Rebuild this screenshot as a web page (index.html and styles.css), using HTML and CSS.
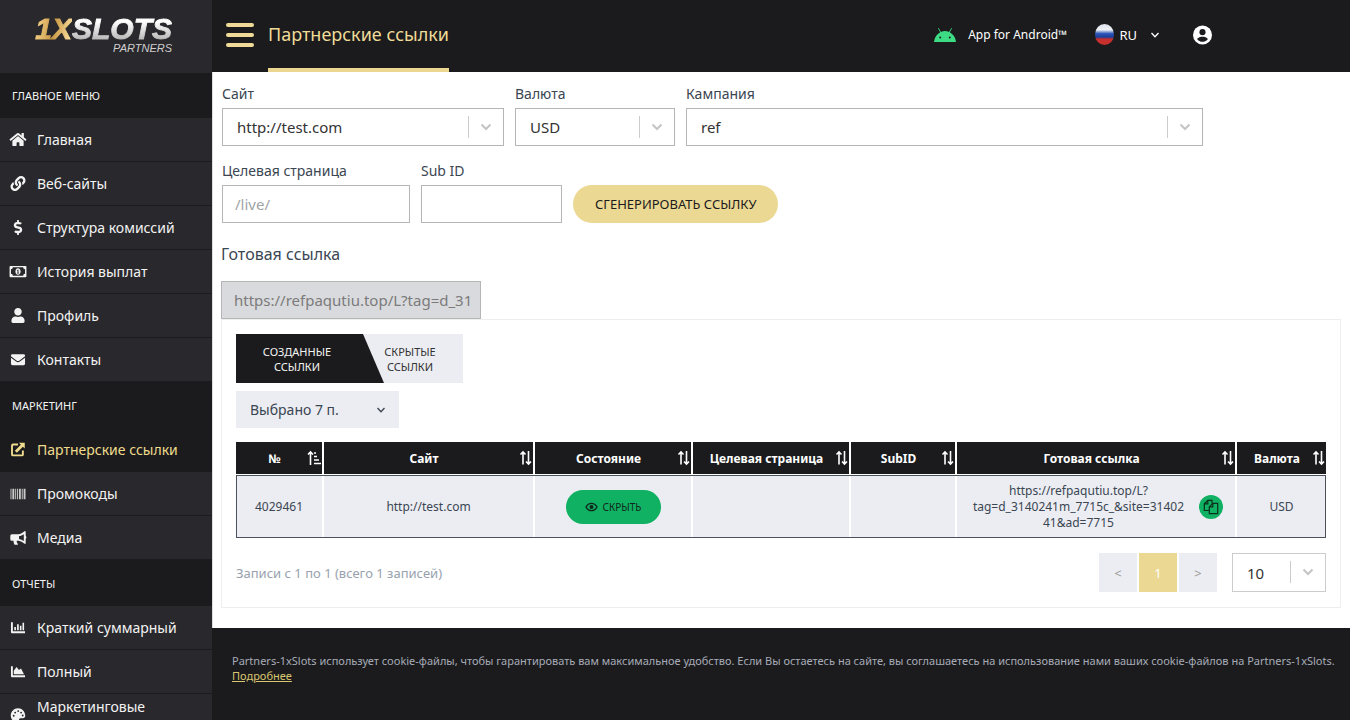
FILE: index.html
```html
<!DOCTYPE html>
<html lang="ru">
<head>
<meta charset="utf-8">
<title>Партнерские ссылки</title>
<link rel="stylesheet" href="styles.css">
</head>
<body>
<div class="app">
  <aside class="sidebar">
    <a class="logo" href="#">
      <span class="logo-main"><span class="logo-gold">1X</span><span class="logo-silver">SLOTS</span></span>
      <span class="logo-sub">PARTNERS</span>
    </a>
    <nav class="menu">
      <h2 class="menu-head">ГЛАВНОЕ МЕНЮ</h2>
      <a class="menu-item" href="#"><svg class="icon" viewBox="0 0 576 512"><path d="M280.37 148.26L96 300.11V464a16 16 0 0 0 16 16l112.06-.29a16 16 0 0 0 15.92-16V368a16 16 0 0 1 16-16h64a16 16 0 0 1 16 16v95.64a16 16 0 0 0 16 16.05L464 480a16 16 0 0 0 16-16V300L295.67 148.26a12.19 12.19 0 0 0-15.3 0zM571.6 251.47L488 182.56V44.05a12 12 0 0 0-12-12h-56a12 12 0 0 0-12 12v72.61L318.47 43a48 48 0 0 0-61 0L4.34 251.47a12 12 0 0 0-1.6 16.9l25.5 31A12 12 0 0 0 45.15 301l235.22-193.74a12.19 12.19 0 0 1 15.3 0L530.9 301a12 12 0 0 0 16.9-1.6l25.5-31a12 12 0 0 0-1.7-16.93z"/></svg>Главная</a>
      <a class="menu-item" href="#"><svg class="icon" viewBox="0 0 512 512"><path d="M326.612 185.391c59.747 59.809 58.927 155.698.36 214.59-.11.12-.24.25-.36.37l-67.2 67.2c-59.27 59.27-155.699 59.262-214.96 0-59.27-59.26-59.27-155.7 0-214.96l37.106-37.106c9.84-9.84 26.786-3.3 27.294 10.606.648 17.722 3.826 35.527 9.69 52.721 1.986 5.822.567 12.262-3.783 16.612l-13.087 13.087c-28.026 28.026-28.905 73.66-1.155 101.96 28.024 28.579 74.086 28.749 102.325.51l67.2-67.19c28.191-28.191 28.073-73.757 0-101.83-3.701-3.694-7.429-6.564-10.341-8.569a16.037 16.037 0 0 1-6.947-12.606c-.396-10.567 3.348-21.456 11.698-29.806l21.054-21.055c5.521-5.521 14.182-6.199 20.584-1.731a152.482 152.482 0 0 1 20.522 17.197zM467.547 44.449c-59.261-59.262-155.69-59.27-214.96 0l-67.2 67.2c-.12.12-.25.25-.36.37-58.566 58.892-59.387 154.781.36 214.59a152.454 152.454 0 0 0 20.521 17.196c6.402 4.468 15.064 3.789 20.584-1.731l21.054-21.055c8.35-8.35 12.094-19.239 11.698-29.806a16.037 16.037 0 0 0-6.947-12.606c-2.912-2.005-6.64-4.875-10.341-8.569-28.073-28.073-28.191-73.639 0-101.83l67.2-67.19c28.239-28.239 74.3-28.069 102.325.51 27.75 28.3 26.872 73.934-1.155 101.96l-13.087 13.087c-4.35 4.35-5.769 10.79-3.783 16.612 5.864 17.194 9.042 34.999 9.69 52.721.509 13.906 17.454 20.446 27.294 10.606l37.106-37.106c59.271-59.259 59.271-155.699.001-214.959z"/></svg>Веб-сайты</a>
      <a class="menu-item" href="#"><svg class="icon" viewBox="0 0 288 512"><path d="M209.2 233.4l-108-31.6C88.7 198.2 80 186.5 80 173.5c0-16.3 13.2-29.5 29.5-29.5h66.3c12.2 0 24.2 3.7 34.2 10.5 6.1 4.1 14.3 3.1 19.5-2l34.8-34c7.1-6.9 6.1-18.4-1.8-24.5C238 74.8 207.4 64.1 176 64V16c0-8.8-7.2-16-16-16h-32c-8.8 0-16 7.2-16 16v48h-2.5C45.8 64-5.4 118.7.5 183.6c4.2 46.1 39.4 83.6 83.8 96.6l102.5 30c12.5 3.7 21.2 15.3 21.2 28.3 0 16.3-13.2 29.5-29.5 29.5h-66.3C100 368 88 364.3 78 357.5c-6.1-4.1-14.3-3.1-19.5 2l-34.8 34c-7.1 6.9-6.1 18.4 1.8 24.5 24.5 19.2 55.1 29.9 86.5 30v48c0 8.8 7.2 16 16 16h32c8.8 0 16-7.2 16-16v-48.2c46.6-.9 90.3-28.6 105.7-72.7 21.5-61.6-14.6-124.8-72.5-141.7z"/></svg>Структура комиссий</a>
      <a class="menu-item" href="#"><svg class="icon" viewBox="0 0 18 16"><path fill-rule="evenodd" d="M1 2h16a1 1 0 0 1 1 1v10a1 1 0 0 1-1 1H1a1 1 0 0 1-1-1V3a1 1 0 0 1 1-1zm2.500 1.500a2 2 0 0 1-2 2v5a2 2 0 0 1 2 2h11a2 2 0 0 1 2-2v-5a2 2 0 0 1-2-2zM9 4.500c1.700 0 2.800 1.600 2.800 3.500S10.700 11.500 9 11.500 6.200 9.900 6.200 8 7.300 4.500 9 4.500zM8 6.300v.9h.5v2H7.900v.8h2.200v-.8h-.6V6.100h-.7z"/></svg>История выплат</a>
      <a class="menu-item" href="#"><svg class="icon" viewBox="0 0 448 512"><path d="M224 256c70.7 0 128-57.3 128-128S294.7 0 224 0 96 57.3 96 128s57.3 128 128 128zm89.6 32h-16.7c-22.2 10.2-46.9 16-72.9 16s-50.6-5.8-72.9-16h-16.7C60.2 288 0 348.2 0 422.4V464c0 26.5 21.5 48 48 48h352c26.500 0 48-21.500 48-48v-41.600c0-74.200-60.200-134.400-134.400-134.400z"/></svg>Профиль</a>
      <a class="menu-item" href="#"><svg class="icon" viewBox="0 0 16 16"><path d="M2 2.500h12A1.500 1.500 0 0 1 15.500 4v.6L9.300 9.200c-.8.600-1.800.600-2.600 0L.5 4.600V4A1.500 1.500 0 0 1 2 2.500zM.5 6l5.500 4.200c1.200.900 2.800.900 4 0L15.500 6v6.500A1.500 1.500 0 0 1 14 14H2A1.500 1.500 0 0 1 .5 12.500z"/></svg>Контакты</a>
      <h2 class="menu-head">МАРКЕТИНГ</h2>
      <a class="menu-item active" href="#"><svg class="icon" viewBox="0 0 16 16"><path d="M9 .800h6.200v6.200l-2-2-6.400 6.400-2.200-2.200L11 2.800z"/><path d="M8 2.700H2.600a1 1 0 0 0-1 1v9.600a1 1 0 0 0 1 1h9.600a1 1 0 0 0 1-1V9" fill="none" stroke="currentColor" stroke-width="2"/></svg>Партнерские ссылки</a>
      <a class="menu-item" href="#"><svg class="icon" viewBox="0 0 16 16"><path opacity=".8" d="M0 3h1v11H0zM2 3h2v11H2zM5 3h1v11H5zM7 3h1v11H7zM9 3h2v11H9zM12 3h1v11h-1zM14 3h2v11h-2z"/></svg>Промокоды</a>
      <a class="menu-item" href="#"><svg class="icon" viewBox="0 0 18 16"><path fill-rule="evenodd" d="M16 1.300c.500-.400 1.200 0 1.200.600v4.500c1 .5 1 2.600 0 3.200v4.500c0 .6-.7 1-1.200.6-2-1.600-4-2.900-6.200-3.200H7.700c-.3 1 .2 2.300 1 3.100.5.600.2 1.200-.5 1.200H6c-.5 0-.8-.2-1-.6-.6-1.200-.9-2.500-.7-3.700H2.500A1.700 1.700 0 0 1 .8 9.800V6.200a1.700 1.700 0 0 1 1.700-1.700h6.700C11.800 4.300 14 2.900 16 1.300zM15.200 4.400c-1.700 1.200-3.300 1.900-5.100 2.100v3c1.800.2 3.400.9 5.100 2.100z"/></svg>Медиа</a>
      <h2 class="menu-head">ОТЧЕТЫ</h2>
      <a class="menu-item" href="#"><svg class="icon" viewBox="0 0 16 16"><path d="M.5 2.500h2v9.500h13v2H1.500a1 1 0 0 1-1-1zM4 7.500h1.800V11H4zM7 4.500h1.800V11H7zM10 6h1.700v5H10zM12.800 3h1.700v8h-1.700z"/></svg>Краткий суммарный</a>
      <a class="menu-item" href="#"><svg class="icon" viewBox="0 0 16 16"><path d="M.5 2.500h2v9.500h13v2H1.500a1 1 0 0 1-1-1zM3.500 11V7.300l3-4.100 2.500 3.300 2.200-1.800 3.200 6.300z"/></svg>Полный</a>
      <a class="menu-item" href="#"><svg class="icon" viewBox="0 0 16 16"><path fill-rule="evenodd" d="M8 .3C3.700.3.300 3.800.300 8S3.700 15.700 8 15.700c1.600 0 2-1.500 1.300-2.500-.6-1.100.2-2.300 1.500-2.300h2.500c1.300 0 2.400-1 2.400-2.400C15.700 3.800 12.300.3 8 .3zM3.400 7.200a1 1 0 1 1 0 2 1 1 0 0 1 0-2zM5 3.900a1 1 0 1 1 0 2 1 1 0 0 1 0-2zM8.200 2.300a1 1 0 1 1 0 2 1 1 0 0 1 0-2zM11.300 3.900a1 1 0 1 1 0 2 1 1 0 0 1 0-2zM13 7a1 1 0 1 1 0 2 1 1 0 0 1 0-2z"/></svg>Маркетинговые инструменты</a>
    </nav>
  </aside>

  <div class="page">
    <header class="topbar">
      <button class="burger" type="button" aria-label="Меню"><span></span><span></span><span></span></button>
      <h1 class="title">Партнерские ссылки</h1>
      <div class="tools">
        <a class="android" href="#"><svg class="droid" viewBox="0 0 22 15"><path fill="#3ddc84" d="M0 15C.4 10.400 3 7 6.200 5.200L3.900 1.300l.7-.4L7 4.900c2.600-1.100 5.400-1.100 8 0L17.400.9l.7.400-2.300 3.900C19 7 21.600 10.400 22 15z"/><circle cx="6.200" cy="10.500" r="1" fill="#1b1b1d"/><circle cx="15.800" cy="10.500" r="1" fill="#1b1b1d"/></svg>App for Android™</a>
        <button class="lang" type="button"><span class="flag"></span>RU<svg class="caret" viewBox="0 0 10 10"><path d="M1.500 3l3.500 3.800L8.500 3"/></svg></button>
        <button class="account" type="button" aria-label="Профиль"><svg viewBox="0 0 20 20"><circle cx="10" cy="10" r="10" fill="#fff"/><circle cx="10" cy="7" r="3.200" fill="#1b1b1d"/><path fill="#1b1b1d" d="M4.300 14.200C5.600 12.500 7.700 11.900 10 11.900s4.400.6 5.700 2.300C14.400 16.100 12.300 17.200 10 17.200s-4.400-1.100-5.700-3z"/></svg></button>
      </div>
    </header>

    <main class="content">
      <form class="form">
        <div class="row-selects">
          <label class="field">Сайт
            <span class="select"><select><option>http://test.com</option></select><svg class="arrow" viewBox="0 0 12 12"><path d="M1.500 3.500L6 8l4.500-4.500"/></svg></span>
          </label>
          <label class="field">Валюта
            <span class="select"><select><option>USD</option></select><svg class="arrow" viewBox="0 0 12 12"><path d="M1.500 3.500L6 8l4.500-4.500"/></svg></span>
          </label>
          <label class="field">Кампания
            <span class="select"><select><option>ref</option></select><svg class="arrow" viewBox="0 0 12 12"><path d="M1.500 3.500L6 8l4.500-4.500"/></svg></span>
          </label>
        </div>
        <div class="row-inputs">
          <label class="field field-landing">Целевая страница<input class="input" type="text" placeholder="/live/"></label>
          <label class="field field-sub">Sub ID<input class="input" type="text"></label>
          <button class="generate" type="button">СГЕНЕРИРОВАТЬ ССЫЛКУ</button>
        </div>
        <label class="result-label" for="result">Готовая ссылка</label>
        <input class="input result" id="result" type="text" value="https://refpaqutiu.top/L?tag=d_31" disabled>
      </form>

      <section class="panel">
        <div class="tabs">
          <button class="tab tab-hidden" type="button">СКРЫТЫЕ<br>ССЫЛКИ</button>
          <button class="tab tab-created" type="button">СОЗДАННЫЕ<br>ССЫЛКИ</button>
        </div>
        <button class="columns" type="button">Выбрано 7 п.<svg class="caret" viewBox="0 0 10 10"><path d="M1.500 3l3.500 3.800L8.500 3"/></svg></button>

        <table class="table">
          <colgroup><col class="c-id"><col class="c-site"><col class="c-mid"><col class="c-mid"><col class="c-sub"><col class="c-link"><col class="c-cur"></colgroup>
          <thead>
            <tr>
              <th><div class="th">№<svg class="sort" viewBox="0 0 14 16"><path d="M3.500 15V2M1 4.500L3.500 2 6 4.500M7 3h2M7 6.500h3M7 10h5M7 13.500h7"/></svg></div></th>
              <th><div class="th">Сайт<svg class="sort" viewBox="0 0 14 16"><path d="M5 14.500V2M2.500 4.500L5 2l2.500 2.500M10.500 1v13M8 11.500l2.500 2.500 2.500-2.500"/></svg></div></th>
              <th><div class="th">Состояние<svg class="sort" viewBox="0 0 14 16"><path d="M5 14.500V2M2.500 4.500L5 2l2.500 2.500M10.500 1v13M8 11.500l2.500 2.500 2.500-2.500"/></svg></div></th>
              <th><div class="th">Целевая страница<svg class="sort" viewBox="0 0 14 16"><path d="M5 14.500V2M2.500 4.500L5 2l2.500 2.500M10.500 1v13M8 11.500l2.500 2.500 2.500-2.500"/></svg></div></th>
              <th><div class="th">SubID<svg class="sort" viewBox="0 0 14 16"><path d="M5 14.500V2M2.500 4.500L5 2l2.500 2.500M10.500 1v13M8 11.500l2.500 2.500 2.500-2.500"/></svg></div></th>
              <th><div class="th">Готовая ссылка<svg class="sort" viewBox="0 0 14 16"><path d="M5 14.500V2M2.500 4.500L5 2l2.500 2.500M10.500 1v13M8 11.500l2.500 2.500 2.500-2.500"/></svg></div></th>
              <th><div class="th">Валюта<svg class="sort" viewBox="0 0 14 16"><path d="M5 14.500V2M2.500 4.500L5 2l2.500 2.500M10.500 1v13M8 11.500l2.500 2.500 2.500-2.500"/></svg></div></th>
            </tr>
          </thead>
          <tbody>
            <tr>
              <td>4029461</td>
              <td>http://test.com</td>
              <td><button class="hide" type="button"><svg viewBox="0 0 14 10"><path fill="none" stroke="currentColor" stroke-width="1.400" d="M1 5c1.400-2.500 3.500-4 6-4s4.600 1.500 6 4c-1.400 2.500-3.500 4-6 4S2.400 7.500 1 5z"/><circle cx="7" cy="5" r="2.200" fill="currentColor"/></svg>СКРЫТЬ</button></td>
              <td></td>
              <td></td>
              <td><div class="link-cell"><span class="link-text">https://refpaqutiu.top/L?<br>tag=d_3140241m_7715c_&amp;site=31402<br>41&amp;ad=7715</span><button class="copy" type="button" aria-label="Копировать"><svg viewBox="0 0 16 16"><path d="M6 11.500H1.300V4.800L4.800 1.300H9v3M1.300 4.800h3.500V1.300M6.300 7.800L9.800 4.300h4.900v10.400H6.300zM6.300 7.800h3.500V4.300"/></svg></button></div></td>
              <td>USD</td>
            </tr>
          </tbody>
        </table>

        <div class="bottom">
          <span class="count">Записи с 1 по 1 (всего 1 записей)</span>
          <div class="pager">
            <button class="pg" type="button">&lt;</button>
            <button class="pg current" type="button">1</button>
            <button class="pg" type="button">&gt;</button>
          </div>
          <span class="select page-size"><select aria-label="Записей на странице"><option>10</option></select><svg class="arrow" viewBox="0 0 12 12"><path d="M1.500 3.500L6 8l4.500-4.500"/></svg></span>
        </div>
      </section>
    </main>

    <footer class="footer">Partners-1xSlots использует cookie-файлы, чтобы гарантировать вам максимальное удобство. Если Вы остаетесь на сайте, вы соглашаетесь на использование нами ваших cookie-файлов на Partners-1xSlots. <a href="#">Подробнее</a></footer>
  </div>
</div>
</body>
</html>
```
FILE: styles.css
```css
* { box-sizing: border-box; }
body {
  margin: 0;
  height: 100vh;
  overflow: hidden;
  font-family: "Noto Sans", "Open Sans", sans-serif;
  font-size: 14px;
  color: #3a4652;
  background: #1b1b1d;
}
button, input, select { font: inherit; color: inherit; }
button { border: 0; padding: 0; background: none; cursor: pointer; }
a { color: inherit; text-decoration: none; }

.app { display: flex; height: 100vh; }

/* Sidebar */
.sidebar { flex: 0 0 212px; overflow: hidden; background: #29282c; color: #f3f3f3; }
.logo {
  display: flex;
  flex-direction: column;
  align-items: flex-end;
  height: 73px;
  padding: 15px 40px 0 0;
  font-family: "Liberation Sans", Arial, sans-serif;
  font-style: italic;
}
.logo-main { font-size: 30px; font-weight: 700; line-height: 28px; white-space: nowrap; }
.logo-gold, .logo-silver { background-clip: text; -webkit-background-clip: text; color: transparent; -webkit-text-stroke: 1px transparent; }
.logo-gold { background-image: linear-gradient(100deg, #f3cf85 10%, #c99845 50%, #f6d995 90%); }
.logo-silver { background-image: linear-gradient(180deg, #fff 30%, #bdbdbd 80%); }
.logo-sub { font-size: 11px; line-height: 10px; color: #cfcfcf; }
.menu-head {
  display: flex;
  align-items: center;
  margin: 0;
  height: 45px;
  padding-left: 12px;
  background: #1b1b1d;
  font-size: 11px;
  font-weight: 400;
}
.menu-item + .menu-head { height: 46px; }
.menu-item {
  display: flex;
  align-items: center;
  gap: 10px;
  height: 44px;
  padding-left: 9px;
  border-bottom: 1px solid #1c1b1f;
  line-height: 18px;
}
.menu-item .icon { flex: none; width: 18px; height: 15px; fill: currentColor; }
.menu-item.active { background: #1b1b1d; color: #efdb8d; }

/* Header */
.page { flex: 1; display: flex; flex-direction: column; min-width: 0; }
.topbar { display: flex; align-items: stretch; height: 72px; padding: 0 138px 0 14px; color: #fff; }
.burger { display: flex; flex-direction: column; justify-content: center; gap: 6px; width: 28px; margin-right: 14px; padding-bottom: 2px; }
.burger span { display: block; height: 4px; border-radius: 2px; background: #efdb97; }
.title {
  display: flex;
  align-items: center;
  margin: 0;
  border-bottom: 4px solid #ecd791;
  font-size: 18px;
  font-weight: 400;
  color: #efdb97;
}
.tools { display: flex; align-items: center; margin-left: auto; padding-bottom: 3px; font-size: 12px; }
.android { display: flex; align-items: center; gap: 12px; }
.droid { width: 22px; height: 15px; }
.lang { display: flex; align-items: center; gap: 5px; margin-left: 28px; font-size: 13px; }
.flag { width: 19px; height: 21px; border-radius: 50%; background: linear-gradient(180deg, #dfe3ea, #eef1f5 28%, #2b55b8 46%, #1b3f9c 62%, #c7302c 72%); }
.caret { width: 10px; height: 10px; margin-left: 8px; fill: none; stroke: currentColor; stroke-width: 1.300; }
.account { width: 19px; height: 20px; margin-left: 33px; }
.account svg { display: block; width: 19px; height: 20px; }

/* Form */
.content { padding: 10px 9px 20px 8px; background: #fff; border-left: 1px solid #ddd; }
.form { margin-right: 138px; }
.row-selects, .row-inputs { padding-left: 1px; }
.row-selects { display: grid; grid-template-columns: 282fr 160fr 517fr; gap: 11px; }
.row-inputs { display: flex; align-items: flex-end; gap: 11px; margin-top: 13px; }
.field { display: block; line-height: 24px; }
.field .select, .field .input { margin-top: 2px; }
.field-landing { width: 188px; }
.field-sub { width: 141px; }
.select { position: relative; display: block; }
.select select {
  display: block;
  width: 100%;
  height: 38px;
  padding: 0 46px 0 14px;
  appearance: none;
  border: 1px solid #b5b5b5;
  border-radius: 0;
  background: #fff;
  color: #333;
  font-size: 15px;
}
.arrow {
  position: absolute;
  top: 8px;
  right: 1px;
  width: 35px;
  height: 22px;
  padding: 5px 11px;
  border-left: 1px solid #ccc;
  fill: none;
  stroke: #c4c4c4;
  stroke-width: 2;
  pointer-events: none;
}
.input {
  display: block;
  width: 100%;
  height: 38px;
  padding: 0 12px;
  border: 1px solid #b5b5b5;
  border-radius: 0;
  background: #fff;
  font-size: 15px;
}
.input::placeholder { color: #a0a4a8; }
.generate { height: 38px; padding: 0 22px; border-radius: 19px; background: #ebd893; color: #1b1b1d; font-size: 13px; }
.result-label { display: block; margin: 19px 0 15px; font-size: 16px; line-height: 24px; }
.input.result { width: 260px; padding-right: 4px; background: #d9dadd; color: #7b7b7b; }

/* Links panel */
.panel { padding: 14px 14px 15px; border: 1px solid #eee; }
.tabs { display: flex; flex-direction: row-reverse; justify-content: flex-end; height: 49px; }
.tab { font-size: 11px; line-height: 15px; }
.tab-created {
  width: 148px;
  padding-right: 26px;
  background: #1b1b1d;
  color: #f3f3f3;
  clip-path: polygon(0 0, 127px 0, 100% 100%, 0 100%);
}
.tab-hidden { width: 100px; margin-left: -21px; padding-right: 6px; background: #ecedf2; color: #333; }
.columns {
  display: flex;
  align-items: center;
  justify-content: space-between;
  width: 163px;
  height: 37px;
  margin: 8px 0 14px;
  padding: 0 13px 0 14px;
  background: #ecedf2;
}
.table { width: 100%; table-layout: fixed; border-spacing: 0; font-size: 12px; text-align: center; }
.c-id { width: 88px; }
.c-site { width: 211px; }
.c-mid { width: 158px; }
.c-sub { width: 106px; }
.c-cur { width: 89px; }
.table th { padding: 0; height: 33px; background: #1b1b1d; border-right: 2px solid #fff; border-bottom: 1px solid #fff; color: #fff; font-size: 12px; }
.table td { padding: 0; height: 63px; background: #ecedf2; border-right: 2px solid #fff; color: #3a4652; }
.table th:last-child, .table td:last-child { border-right: 0; }
.table tbody tr { outline: 1px solid #4b525c; outline-offset: -1px; }
.th { display: grid; grid-template-columns: 1fr 14px; align-items: center; padding: 0 1px 0 6px; white-space: nowrap; }
.sort { width: 14px; height: 16px; fill: none; stroke: currentColor; stroke-width: 1.600; }
.hide {
  display: inline-flex;
  align-items: center;
  justify-content: center;
  gap: 5px;
  width: 95px;
  height: 34px;
  border-radius: 17px;
  background: #10b163;
  color: #10281c;
  font-size: 10px;
}
.hide svg { width: 13px; height: 10px; }
.link-cell { display: flex; align-items: center; justify-content: flex-end; padding-right: 12px; gap: 15px; }
.link-text { line-height: 16px; white-space: nowrap; }
.copy { flex: none; display: grid; place-items: center; width: 24px; height: 24px; border-radius: 50%; background: #10b163; color: #0c2f1c; }
.copy svg { width: 16px; height: 16px; fill: none; stroke: currentColor; stroke-width: 1.200; }
.bottom { display: flex; align-items: center; margin-top: 15px; }
.count { margin-right: auto; font-size: 13px; color: #98a2ae; }
.pager { display: flex; gap: 2px; margin-right: 15px; }
.pg { width: 38px; height: 39px; background: #ecedf2; color: #999; font-size: 13px; }
.pg.current { background: #ebd893; color: #fff; }
.page-size { width: 94px; }
.page-size select { height: 39px; border-color: #ccc; }

/* Footer */
.footer { flex: 1; padding: 25px 8px 25px 20px; color: #a7acb8; font-size: 11px; line-height: 15px; }
.footer a { color: #d8c56f; text-decoration: underline; }
```
